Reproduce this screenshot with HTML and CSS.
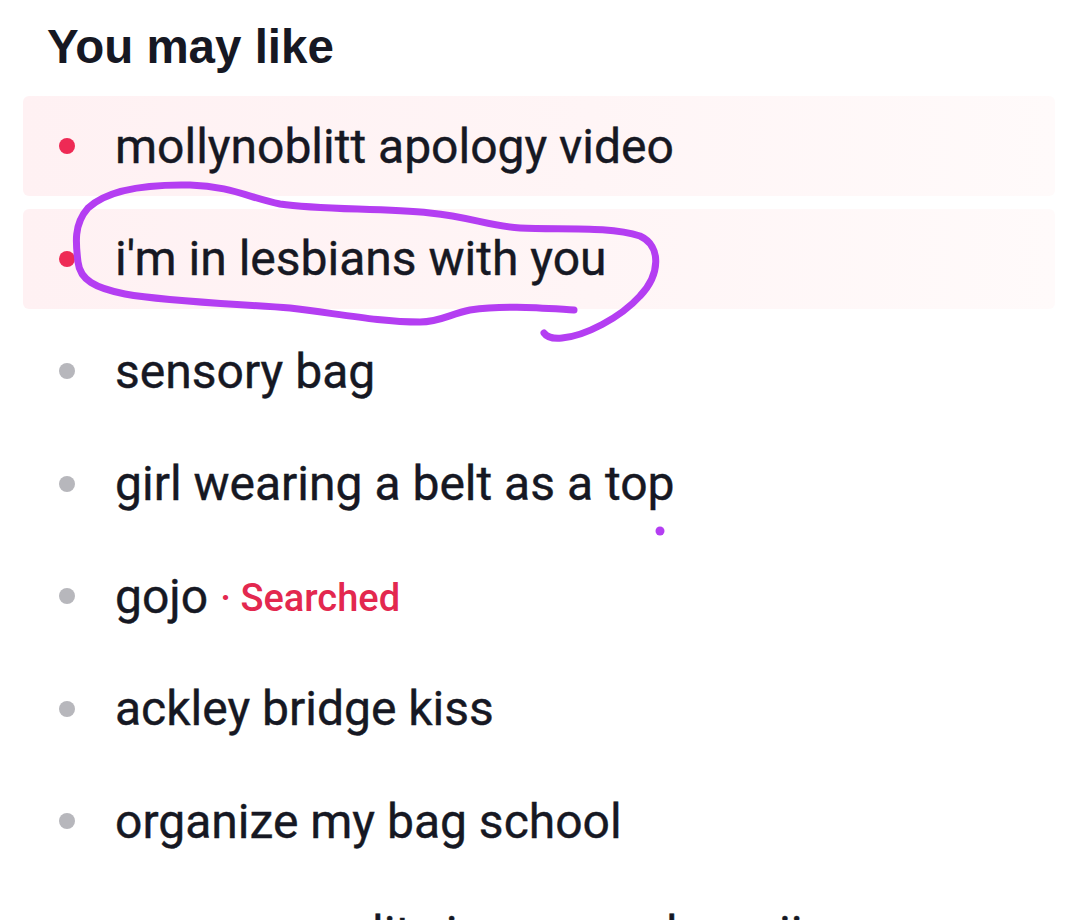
FILE: index.html
```html
<!DOCTYPE html>
<html lang="en">
<head>
    <meta charset="UTF-8">
    <meta name="viewport" content="width=device-width, initial-scale=1.0">
    <title>You may like</title>
    <link rel="stylesheet" href="styles.css">
</head>
<body>
    <main class="suggest">
        <h2 class="suggest-title">You may like</h2>

        <ul class="suggest-list">
            <li class="row row--hot"><span class="dot"></span><span class="label">mollynoblitt apology video</span></li>
            <li class="row row--hot"><span class="dot"></span><span class="label">i'm in lesbians with you</span></li>
            <li class="row"><span class="dot"></span><span class="label">sensory bag</span></li>
            <li class="row"><span class="dot"></span><span class="label">girl wearing a belt as a top</span></li>
            <li class="row"><span class="dot"></span><span class="label">gojo</span><span class="searched">&middot; Searched</span></li>
            <li class="row"><span class="dot"></span><span class="label">ackley bridge kiss</span></li>
            <li class="row"><span class="dot"></span><span class="label">organize my bag school</span></li>
            <li class="row"><span class="dot"></span><span class="label">maroon quality ice cream kawaii</span></li>
        </ul>
    </main>

    <!-- hand drawn marker on top of the screenshot -->
    <svg class="scribble" width="1080" height="920" viewBox="0 0 1080 920">
        <path d="M 574 310
                 C 540 308, 505 305, 470 310
                 C 450 314, 440 322, 420 322
                 C 380 322, 340 314, 290 308
                 C 240 304, 170 302, 125 294
                 C 95 288, 80 280, 78 262
                 C 76 245, 73 225, 88 208
                 C 105 192, 140 184, 190 185
                 C 230 186, 250 198, 280 204
                 C 320 210, 380 208, 430 213
                 C 470 217, 490 226, 520 228
                 C 560 230, 610 226, 640 236
                 C 662 246, 660 275, 640 296
                 C 620 318, 585 336, 562 338
                 C 552 339, 546 336, 544 333"
              fill="none" stroke="#b43ef2" stroke-width="7" stroke-linecap="round" stroke-linejoin="round"/>
        <circle cx="660" cy="531" r="4.5" fill="#b43ef2"/>
    </svg>
</body>
</html>
```

FILE: styles.css
```css
html, body {
    margin: 0;
    padding: 0;
    background: #fff;
    overflow: hidden;
}

body {
    font-family: Roboto, "Liberation Sans", Arial, sans-serif;
    color: #161823;
    position: relative;
    height: 920px;
}

.suggest {
    padding: 0 25px 0 23px;
}

.suggest-title {
    margin: 0 0 26px 24px;
    padding-top: 23px;
    font-family: "Liberation Sans", Arial, sans-serif;
    font-size: 47.5px;
    line-height: 47px;
    font-weight: 700;
}

.suggest-list {
    list-style: none;
    margin: 0;
    padding: 0;
    display: flex;
    flex-direction: column;
    gap: 12.5px;
}

.row {
    height: 100px;
    display: flex;
    align-items: center;
    padding-left: 36px;
    border-radius: 6px;
}

.row--hot {
    background: linear-gradient(90deg, #fff1f3 0%, #fff5f6 55%, #fffafa 100%);
}

.dot {
    width: 16px;
    height: 16px;
    border-radius: 50%;
    background-color: #b7b7bc;
    margin-right: 40px;
    flex: none;
}

.row--hot .dot {
    background-color: #ee2a55;
}

.label {
    font-size: 48px;
    font-weight: 400;
    white-space: nowrap;
    -webkit-text-stroke: 0.4px #161823;
}

.searched {
    color: #e3284f;
    font-size: 38px;
    font-weight: 500;
    margin-left: 12px;
    padding-top: 4px;
}

.scribble {
    position: absolute;
    top: 0;
    left: 0;
    pointer-events: none;
}
```
